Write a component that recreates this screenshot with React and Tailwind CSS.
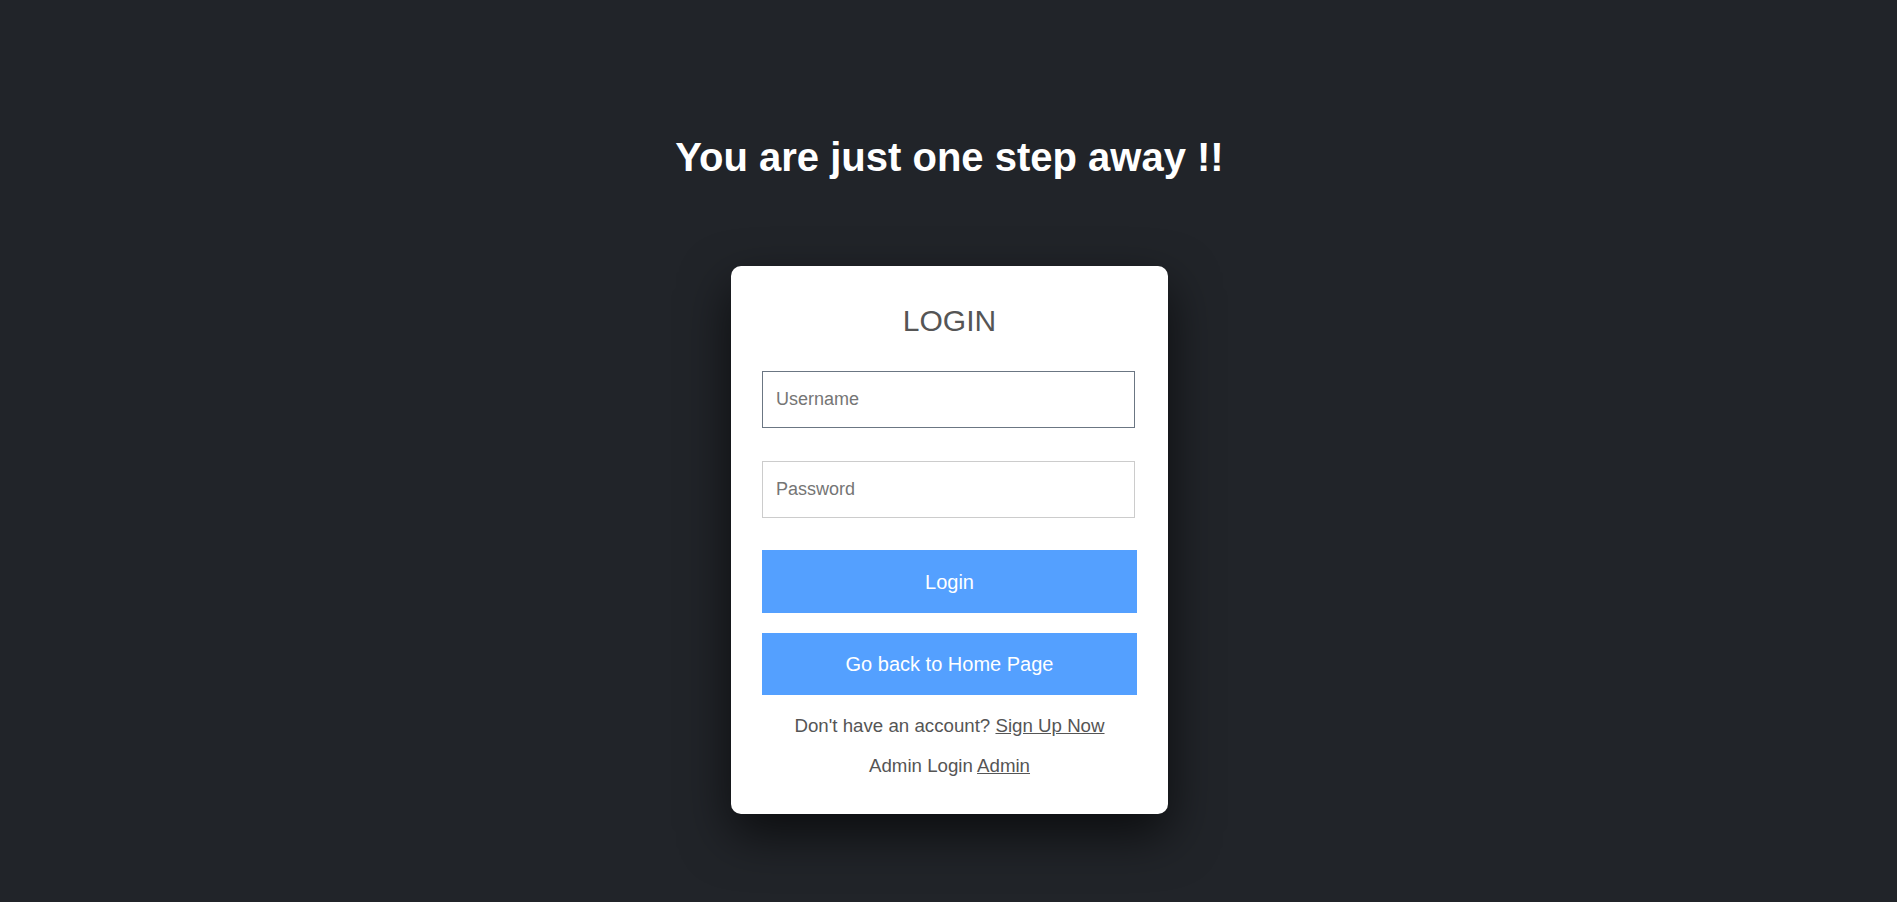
import { useState } from 'react';

export default function App() {
  const [username, setUsername] = useState('');
  const [password, setPassword] = useState('');

  return (
    <div className="min-h-screen bg-[#212429] flex flex-col items-center pt-[134px] pl-[2px] font-['Liberation_Sans',Arial,sans-serif]">
      <h1 className="text-[40px] leading-[46px] font-bold text-white mb-[86px]">You are just one step away !!</h1>

      <div className="w-[437px] bg-white rounded-[10px] pt-[38px] pb-[38px] px-[31px] flex flex-col items-center shadow-[0_20px_50px_rgba(0,0,0,0.65)]">
        <h2 className="text-[30px] leading-[34px] text-[#555] mb-[33px]">LOGIN</h2>

        <form className="w-full flex flex-col" onSubmit={(e) => e.preventDefault()}>
          <input
            autoFocus
            type="text"
            value={username}
            onChange={(e) => setUsername(e.target.value)}
            placeholder="Username"
            className="w-[373px] h-[57px] px-[13px] text-[18px] text-[#333] border border-[#ccc] placeholder:text-[#757575] outline-none focus:border-[#6b7683]"
          />
          <input
            type="password"
            value={password}
            onChange={(e) => setPassword(e.target.value)}
            placeholder="Password"
            className="w-[373px] h-[57px] mt-[33px] px-[13px] text-[18px] text-[#333] border border-[#ccc] placeholder:text-[#757575] outline-none focus:border-[#6b7683]"
          />
          <button type="submit" className="w-full h-[63px] mt-[32px] bg-[#54a0ff] text-white text-[20px]">
            Login
          </button>
          <button type="button" className="w-full h-[62px] mt-[20px] bg-[#54a0ff] text-white text-[20px]">
            Go back to Home Page
          </button>
        </form>

        <p className="mt-[20px] text-[18.7px] leading-[21px] text-[#555]">
          Don't have an account? <a href="#" className="underline">Sign Up Now</a>
        </p>
        <p className="mt-[19px] text-[18.7px] leading-[21px] text-[#555]">
          Admin Login <a href="#" className="underline">Admin</a>
        </p>
      </div>
    </div>
  );
}
